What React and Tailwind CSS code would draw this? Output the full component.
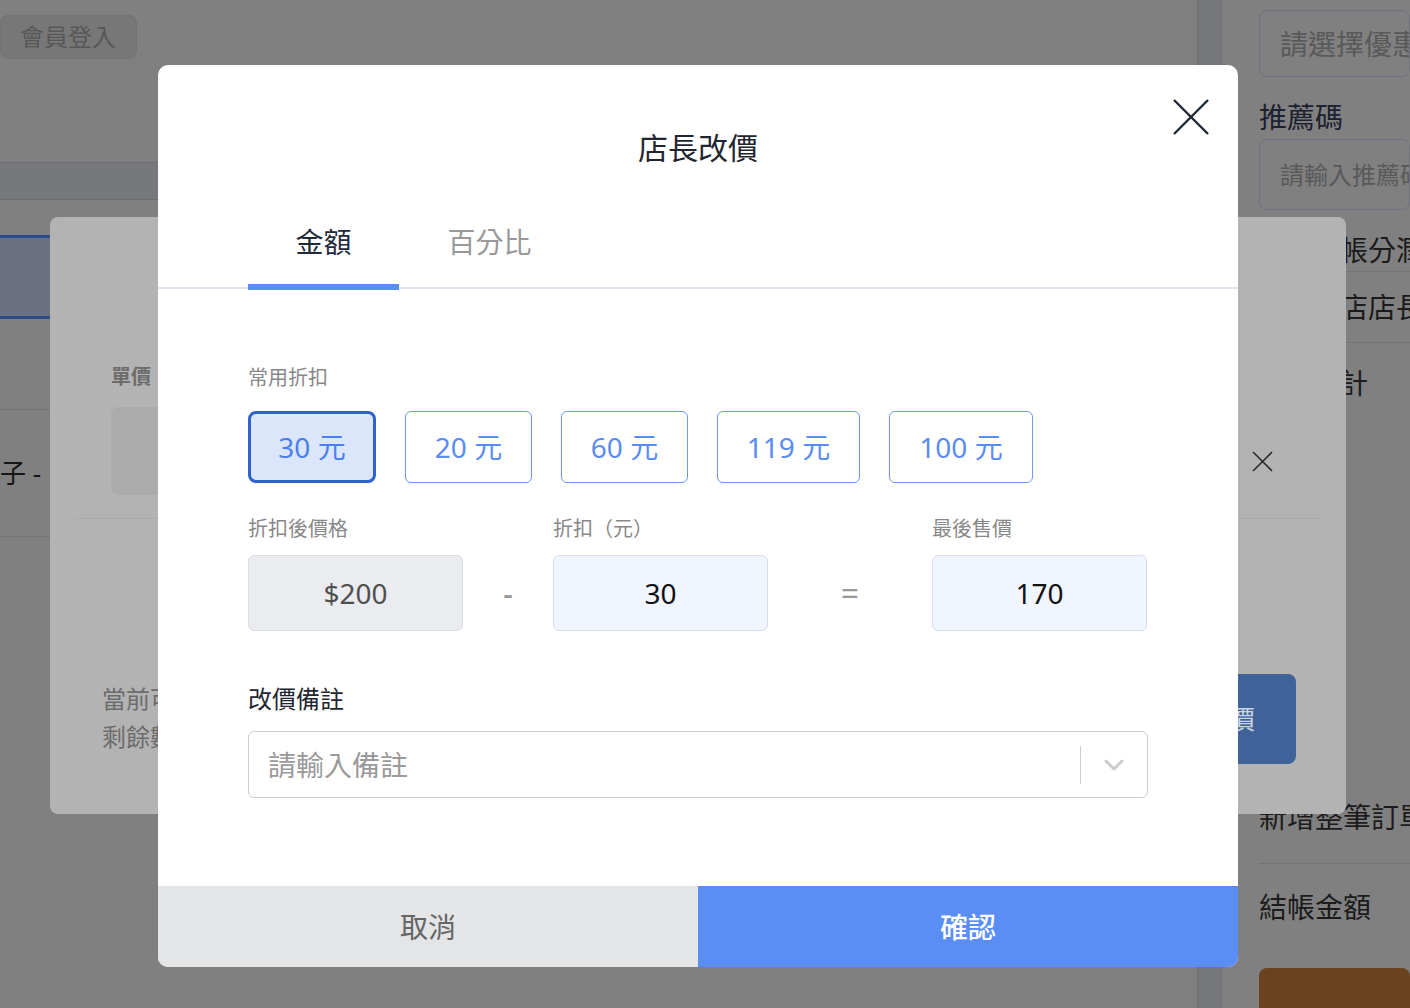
import React from "react";

function XIcon({ size, stroke, color }) {
  return (
    <svg width={size} height={size} viewBox={`0 0 ${size} ${size}`} fill="none">
      <line x1="1" y1="1" x2={size - 1} y2={size - 1} stroke={color} strokeWidth={stroke} />
      <line x1={size - 1} y1="1" x2="1" y2={size - 1} stroke={color} strokeWidth={stroke} />
    </svg>
  );
}

const quick = [
  { label: "30 元", w: "w-[128px]", active: true },
  { label: "20 元", w: "w-[127px]" },
  { label: "60 元", w: "w-[127px]" },
  { label: "119 元", w: "w-[143px]" },
  { label: "100 元", w: "w-[144px]" },
];

function BackgroundPage() {
  return (
    <div className="absolute inset-0 flex bg-[#808080]">
      {/* main column */}
      <div className="w-[1197px] shrink-0">
        <div className="pt-[15px]">
          <div className="w-[137px] h-[44px] rounded-lg bg-[#777777] border border-[#737373] flex items-center pl-[19px] text-[24px] leading-[32px] text-[#575757]">
            會員登入
          </div>
        </div>
        <div className="mt-[103px] h-[38px] border-y border-[#6c6d70] bg-[#77787c]" />
        <div className="mt-[35px] h-[84px] border-y-[3px] border-[#2d4a8a] bg-[#6b7180]" />
        <div className="mt-[90px] h-[128px] border-y border-[#6f737c] flex items-center">
          <span className="-ml-[26px] text-[26px] leading-[34px] text-[#161616] whitespace-nowrap">椰子 -</span>
        </div>
      </div>
      {/* divider strip */}
      <div className="w-[25px] shrink-0 bg-[#76777b] border-x border-[#6e6f73]" />
      {/* right panel */}
      <div className="flex-1 min-w-0 overflow-hidden pl-[37px]">
        <div className="-mt-[34px] h-[36px] text-[28px] leading-[36px] text-[#1b2130] whitespace-nowrap">優惠券選擇</div>
        <div className="mt-[8px] h-[67px] rounded-lg border border-[#6e7280] flex items-center pl-[20px] text-[28px] text-[#595959] whitespace-nowrap overflow-hidden">
          請選擇優惠券
        </div>
        <div className="mt-[24px] h-[32px] text-[28px] leading-[32px] text-[#1b2130]">推薦碼</div>
        <div className="mt-[6px] h-[71px] rounded-lg border border-[#6e7280] flex items-center pl-[20px] text-[24px] text-[#595959] whitespace-nowrap overflow-hidden">
          請輸入推薦碼
        </div>
        <div className="h-[62px] pt-[22px] border-b border-[#6f737c] text-[28px] leading-[36px] text-[#1b1b1b] whitespace-nowrap -ml-[3px]">
          店員結帳分潤
        </div>
        <div className="h-[71px] border-b border-[#6f737c] flex items-center text-[28px] leading-[36px] text-[#1b1b1b] whitespace-nowrap -ml-[3px]">
          指定分店店長
        </div>
        <div className="border-b border-[#6f737c] pb-[28px]">
          <div className="pt-[22px] text-[28px] leading-[36px] text-[#1b1b1b] whitespace-nowrap -ml-[3px]">商品總計</div>
          <div className="mt-[398px] text-[28px] leading-[36px] text-[#1b1b1b] whitespace-nowrap">新增整筆訂單</div>
        </div>
        <div className="pt-[25px] text-[28px] leading-[36px] text-[#1b1b1b] whitespace-nowrap">結帳金額</div>
        <div className="mt-[43px] h-[60px] rounded-lg bg-[#6a4220]" />
      </div>
    </div>
  );
}

function UnderModal() {
  return (
    <div className="absolute left-[50px] top-[217px] w-[1296px] h-[597px] rounded-lg bg-[#b3b3b3] flex flex-col">
      <div className="absolute left-[1202px] top-[234px]">
        <XIcon size={21} stroke={1.6} color="#2a2a2a" />
      </div>
      <div className="mt-[146px] ml-[61px] text-[20px] leading-[28px] font-bold text-[#6c6c6c]">單價</div>
      <div className="mt-[16px] ml-[61px] w-[320px] h-[88px] rounded-lg bg-[#ababab]" />
      <div className="mt-[23px] mx-[25px] h-px bg-[#a9a9a9]" />
      <div className="mt-[155px] flex justify-between items-start">
        <div className="pl-[52px] pt-[6px] text-[24px] leading-[38px] text-[#6c6c6c]">
          <div>當前可用餘額</div>
          <div>剩餘數量</div>
        </div>
        <div className="mr-[50px] w-[180px] h-[90px] rounded-lg bg-[#3f6298] flex items-center justify-center pr-[6px] text-[26px] text-[#c9d3e3]">
          確定改價
        </div>
      </div>
    </div>
  );
}

function MainModal() {
  return (
    <div className="absolute left-[158px] top-[65px] w-[1080px] h-[902px] rounded-[10px] bg-white flex flex-col overflow-hidden">
      <button className="absolute right-[29px] top-[34px]">
        <XIcon size={36} stroke={2.4} color="#1f2937" />
      </button>
      <div className="pt-[63px] text-center text-[30px] leading-[40px] text-[#1f2630]">店長改價</div>

      {/* tabs */}
      <div className="mt-[54px] px-[90px] flex">
        <div className="w-[151px] flex flex-col items-center">
          <div className="text-[28px] leading-[40px] text-[#1e2a3a]">金額</div>
          <div className="relative z-10 mt-[22px] h-[6px] w-full bg-[#5b8ef5]" />
        </div>
        <div className="ml-[15px] w-[151px] flex flex-col items-center">
          <div className="text-[28px] leading-[40px] text-[#999999]">百分比</div>
        </div>
      </div>
      <div className="-mt-[3px] h-[2px] bg-[#dfe5f1]" />

      <div className="px-[90px] flex flex-col">
        <div className="mt-[75px] text-[20px] leading-[28px] text-[#888888]">常用折扣</div>
        <div className="mt-[19px] flex gap-[29px]">
          {quick.map((q) =>
            q.active ? (
              <div
                key={q.label}
                className={`${q.w} h-[72px] rounded-lg border-[3px] border-[#2e63cb] bg-[#dce6fb] flex items-center justify-center text-[28px] text-[#4a80ee]`}
              >
                {q.label}
              </div>
            ) : (
              <div
                key={q.label}
                className={`${q.w} h-[72px] rounded-md border border-[#6e9af2] bg-white flex items-center justify-center text-[28px] text-[#5b8cf2]`}
              >
                {q.label}
              </div>
            )
          )}
        </div>

        <div className="mt-[32px] grid grid-cols-[215px_90px_215px_164px_215px]">
          <div className="text-[20px] leading-[28px] text-[#888888]">折扣後價格</div>
          <div />
          <div className="text-[20px] leading-[28px] text-[#888888]">折扣（元）</div>
          <div />
          <div className="text-[20px] leading-[28px] text-[#888888]">最後售價</div>

          <div className="mt-[12px] h-[76px] rounded-md border border-[#d9dce5] bg-[#ebecf0] flex items-center justify-center text-[28px] text-[#4f4f4f]">
            $200
          </div>
          <div className="mt-[12px] h-[76px] flex items-center justify-center text-[30px] font-medium text-[#999999]">-</div>
          <div className="mt-[12px] h-[76px] rounded-md border border-[#d6dff0] bg-[#f0f5fe] flex items-center justify-center text-[28px] text-[#111111]">
            30
          </div>
          <div className="mt-[12px] h-[76px] flex items-center justify-center text-[32px] text-[#999999]">=</div>
          <div className="mt-[12px] h-[76px] rounded-md border border-[#d6dff0] bg-[#f0f5fe] flex items-center justify-center text-[28px] text-[#111111]">
            170
          </div>
        </div>

        <div className="mt-[52px] text-[24px] leading-[32px] text-[#1f2630]">改價備註</div>
        <div className="mt-[16px] h-[67px] rounded-md border border-[#cccccc] flex items-center">
          <div className="flex-1 pl-[19px] text-[28px] text-[#9a9a9a]">請輸入備註</div>
          <div className="w-px h-[38px] bg-[#cccccc]" />
          <div className="w-[66px] flex items-center justify-center">
            <svg width="22" height="14" viewBox="0 0 22 14" fill="none">
              <path d="M3 3 L11 11 L19 3" stroke="#cccccc" strokeWidth="3" strokeLinecap="round" strokeLinejoin="round" />
            </svg>
          </div>
        </div>
      </div>

      <div className="flex-1" />
      <div className="h-[81px] flex">
        <div className="flex-1 bg-[#e4e5e7] flex items-center justify-center text-[28px] text-[#666666]">取消</div>
        <div className="flex-1 bg-[#5b8ef5] flex items-center justify-center text-[28px] font-medium text-white">確認</div>
      </div>
    </div>
  );
}

export default function App() {
  return (
    <div className="relative w-[1410px] h-[1008px] overflow-hidden font-['Noto_Sans','Noto_Sans_CJK_TC',sans-serif]">
      <BackgroundPage />
      <UnderModal />
      <MainModal />
    </div>
  );
}
